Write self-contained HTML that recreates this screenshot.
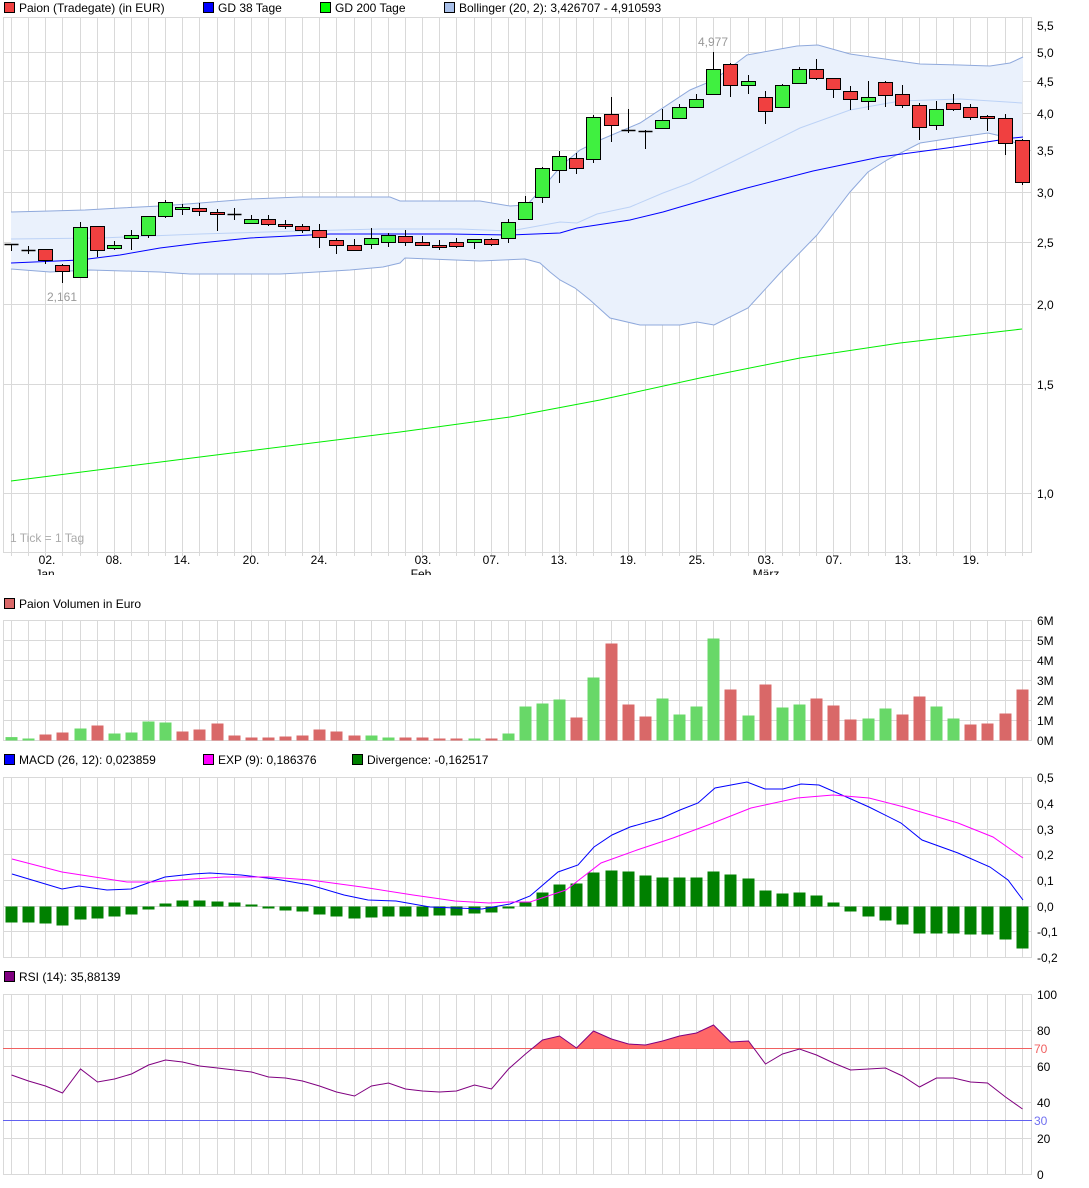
<!DOCTYPE html>
<html><head><meta charset="utf-8">
<style>
html,body{margin:0;padding:0;background:#fff;}
body{width:1089px;height:1188px;overflow:hidden;}
svg{display:block;font-family:"Liberation Sans",sans-serif;font-size:12px;}
</style></head>
<body>
<svg id="c" width="1089" height="1188" xmlns="http://www.w3.org/2000/svg"></svg>
<script>
var s='';
function X(i){return 11+17.13*i;}
function L(x1,y1,x2,y2,c,w){s+='<line x1="'+x1+'" y1="'+y1+'" x2="'+x2+'" y2="'+y2+'" stroke="'+c+'" stroke-width="'+(w||1)+'"/>';}
function R(x,y,w,h,f,st){s+='<rect x="'+x+'" y="'+y+'" width="'+w+'" height="'+h+'" fill="'+f+'"'+(st?' stroke="'+st+'" stroke-width="1"':'')+'/>';}
function T(x,y,t,c,a){s+='<text x="'+x+'" y="'+y+'" fill="'+(c||'#000')+'"'+(a?' text-anchor="'+a+'"':'')+'>'+t+'</text>';}
function P(pts,c,w,fill){var d=pts.map(function(p){return p[0]+','+p[1];}).join(' ');
 if(fill) s+='<polygon points="'+d+'" fill="'+fill+'" stroke="none"/>';
 else s+='<polyline points="'+d+'" fill="none" stroke="'+c+'" stroke-width="'+(w||1)+'"/>';}
var G='#d9d9d9';
function panel(top,bot,hl){
 L(3.5,top,3.5,bot,G);L(1031.5,top,1031.5,bot,G);
 for(var i=0;i<60;i++){var x=Math.round(X(i))+0.5;L(x,top,x,bot,G);}
 L(3,top+0.5,1032,top+0.5,G);L(3,bot+0.5,1032,bot+0.5,G);
 hl.forEach(function(y){L(3,y+0.5,1032,y+0.5,G);});
}
function leg(x,y,c,t){R(x+0.5,y-4.5,10,10,c,'#000');T(x+15,y+5,t);}
// ===== legends
leg(4,7,'#f04040','Paion (Tradegate) (in EUR)');
leg(203,7,'#0000ff','GD 38 Tage');
leg(320,7,'#00ff00','GD 200 Tage');
leg(444,7,'#a8bfe8','Bollinger (20, 2): 3,426707 - 4,910593');
// ===== main panel
var ml=[[52,'5,0'],[81,'4,5'],[113,'4,0'],[150,'3,5'],[192,'3,0'],[242,'2,5'],[304,'2,0'],[384,'1,5'],[493,'1,0']];
panel(17,552,ml.map(function(a){return a[0];}));
for(var i=0;i<60;i++){var x=Math.round(X(i))+0.5;L(x,552,x,556,G);}
T(1037,30,'5,5');ml.forEach(function(a){T(1037,a[0]+5,a[1]);});
var up=[[11,212],[50,211],[85,210],[120,208],[160,206],[200,203],[250,199],[300,197],[390,197],[400,201],[480,201],[510,206],[527,205],[545,185],[562,165],[580,150],[600,140],[640,123],[690,90],[714,80],[747,55],[797,46],[818,45],[850,54],[920,64],[960,65],[990,66],[1010,63],[1023,57]];
var lo=[[11,269],[50,272],[90,270],[160,272],[190,274],[280,274],[300,273],[350,270],[383,267],[400,263],[405,258],[480,261],[525,259],[540,263],[550,272],[560,280],[575,288],[590,300],[610,318],[640,325],[680,325],[697,322],[714,325],[748,308],[780,273],[817,235],[850,192],[868,172],[887,160],[920,143],[953,138],[988,133],[1005,137],[1022,147]];
P(up.concat(lo.slice().reverse()),null,1,'#eaf1fc');
P(up,'#8fa9dc');P(lo,'#8fa9dc');
P([[11,239],[100,238],[200,234],[300,231],[380,229],[460,229],[510,231],[527,228],[560,222],[577,223],[597,214],[630,207],[663,193],[690,183],[750,153],[800,128],[850,110],[900,101],[960,99],[1022,103]],'#bcd2f6');
P([[11,263],[80,260],[120,255],[160,248],[200,243],[250,238],[330,234],[450,234],[510,235],[560,233],[577,228],[630,220],[663,212],[680,207],[747,188],[813,171],[880,157],[947,148],[1013,138],[1023,137]],'#0000ff');
P([[11,481],[200,457],[400,432],[510,417],[600,400],[700,378],[800,358],[900,343],[1022,329]],'#00ee00');
// candles: [wickTop, bodyTop, bodyBot, wickBot, color]
var cd=[[244,244,244,251,'d'],[246,250,250,254,'d'],[249,249,260,264,'r'],[264,265,271,283,'r'],[222,227,277,277,'g'],[226,226,250,257,'r'],[241,245,248,250,'g'],[230,235,238,250,'g'],[216,216,235,238,'g'],[200,202,216,218,'g'],
[204,207,209,215,'g'],[203,208,211,216,'r'],[209,212,214,231,'r'],[208,214,214,220,'d'],[215,219,223,223,'g'],[215,219,224,226,'r'],[220,224,226,229,'r'],[224,226,230,233,'r'],[224,230,237,248,'r'],[238,240,245,254,'r'],
[239,245,250,250,'r'],[228,238,244,249,'g'],[233,235,242,247,'g'],[230,236,242,246,'r'],[236,242,245,246,'r'],[240,245,247,250,'r'],[238,242,246,248,'r'],[239,239,242,249,'g'],[238,239,244,246,'r'],[219,222,238,243,'g'],
[196,202,219,219,'g'],[167,168,197,203,'g'],[151,156,170,183,'g'],[153,158,168,174,'r'],[115,117,159,163,'g'],[97,114,125,142,'r'],[109,130,130,133,'d'],[130,131,131,149,'d'],[109,120,128,128,'g'],[104,107,118,118,'g'],
[94,99,107,107,'g'],[52,69,94,94,'g'],[63,64,85,97,'r'],[75,81,85,94,'g'],[91,97,111,124,'r'],[84,85,107,107,'g'],[67,69,83,83,'g'],[59,69,78,80,'r'],[78,78,89,98,'r'],[86,91,99,110,'r'],
[81,97,101,110,'g'],[81,82,95,107,'r'],[85,94,105,108,'r'],[103,105,127,140,'r'],[101,109,125,130,'g'],[94,103,109,111,'r'],[104,107,117,120,'r'],[115,116,118,131,'r'],[114,118,143,155,'r'],[139,140,182,185,'r']];
cd.forEach(function(c,i){var x=Math.round(X(i))+0.5;
 L(x,c[0],x,c[3],'#000');
 if(c[4]=='d'){L(x-7,c[1]+0.5,x+7,c[1]+0.5,'#000',1.5);}
 else R(x-7,c[1]+0.5,14,Math.max(c[2]-c[1],2),c[4]=='r'?'#f04040':'#40f040','#000');});
T(62,301,'2,161','#999','middle');T(713,46,'4,977','#999','middle');
T(10,542,'1 Tick = 1 Tag','#aaa');
// x labels
s+='<clipPath id="xc"><rect x="0" y="552" width="1089" height="23"/></clipPath><g clip-path="url(#xc)">';
[[47,'02.'],[114,'08.'],[182,'14.'],[251,'20.'],[319,'24.'],[423,'03.'],[491,'07.'],[559,'13.'],[628,'19.'],[697,'25.'],[766,'03.'],[834,'07.'],[903,'13.'],[971,'19.']].forEach(function(a){T(a[0],564,a[1],'#000','middle');});
T(45,578,'Jan','#000','middle');T(421,578,'Feb','#000','middle');T(766,578,'März','#000','middle');
s+='</g>';
// ===== volume
leg(4,603,'#d96868','Paion Volumen in Euro');
panel(620,740,[640,660,680,700,720]);
['6M','5M','4M','3M','2M','1M','0M'].forEach(function(t,k){T(1037,625+20*k,t);});
var vo=[.17,.1,.3,.4,.6,.75,.35,.4,.95,.9,.45,.55,.85,.25,.15,.15,.2,.25,.55,.45,.25,.25,.15,.15,.15,.1,.1,.1,.1,.35,1.7,1.85,2.05,1.15,3.15,4.85,1.8,1.2,2.1,1.3,1.7,5.1,2.55,1.25,2.8,1.65,1.8,2.1,1.75,1.05,1.1,1.6,1.3,2.2,1.7,1.1,.8,.85,1.35,2.55];
var vc='ggrrgrggggrrrrrrrrrrrggrrrrgrggggrgrrrggggrgrggrrrggrrggrrrr';
vo.forEach(function(v,i){var h=v*20;R(Math.round(X(i))-5.5,740.5-h,12,h,vc[i]=='g'?'#68d868':'#d96868');});
// ===== MACD
leg(4,759,'#0000ff','MACD (26, 12): 0,023859');leg(203,759,'#ff00ff','EXP (9): 0,186376');leg(352,759,'#008000','Divergence: -0,162517');
panel(777,957,[803,829,854,880,906,931]);
[['0,5',777],['0,4',803],['0,3',829],['0,2',854],['0,1',880],['0,0',906],['-0,1',931],['-0,2',957]].forEach(function(a){T(1037,a[1]+5,a[0]);});
var hd=[922,922,923,925,919,918,916,914,909,903,900,900,901,902,904,908,910,911,914,916,918,917,916,916,916,915,915,913,912,908,902,892,884,883,872,870,871,875,877,877,877,871,874,878,890,893,892,895,902,911,916,920,924,933,933,933,934,934,939,948];
hd.forEach(function(y,i){var t=Math.min(y,906),h=Math.abs(y-906);R(Math.round(X(i))-5.5,t+0.5,12,Math.max(h,1),'#008000');});
P([[12,874],[62,889],[79,886],[107,890],[131,889],[165,877],[193,874],[210,873],[241,875],[275,879],[310,885],[344,895],[368,900],[396,901],[430,907],[482,909],[510,904],[530,896],[558,872],[578,865],[594,847],[612,835],[630,827],[662,818],[680,810],[698,803],[715,788],[747,782],[765,789],[783,789],[801,784],[819,785],[851,799],[869,807],[901,823],[922,840],[958,853],[990,867],[1008,880],[1023,900]],'#0000ff');
P([[12,859],[62,872],[127,882],[152,882],[193,879],[224,877],[269,877],[310,880],[362,887],[413,895],[455,901],[489,903],[510,902],[530,902],[566,890],[601,863],[637,850],[673,838],[708,825],[751,808],[797,798],[833,795],[869,798],[904,807],[958,823],[993,837],[1023,858]],'#ff00ff');
// ===== RSI
leg(4,976,'#800080','RSI (14): 35,88139');
panel(994,1174,[1030,1066,1102,1138]);
var rs=[1075,1081,1086,1093,1069,1082,1079,1074,1065,1060,1062,1066,1068,1070,1072,1077,1078,1081,1086,1092,1096,1086,1083,1089,1091,1092,1091,1085,1089,1069,1054,1040,1036,1048,1031,1039,1044,1045,1041,1036,1033,1025,1042,1041,1064,1054,1049,1055,1063,1070,1069,1068,1076,1087,1078,1078,1082,1083,1097,1109];
var rp=rs.map(function(y,i){return [Math.round(X(i))+0.5,y];});
// fill above 70
s+='<clipPath id="rc"><rect x="0" y="990" width="1089" height="58.5"/></clipPath>';
s+='<g clip-path="url(#rc)">';P(rp.concat([[1023,1048.5],[11,1048.5]]),null,1,'#ff6868');s+='</g>';
L(3,1048.5,1032,1048.5,'#f06060');L(3,1120.5,1032,1120.5,'#6060f0');
P(rp,'#800080');
T(1037,1035,'80');T(1037,1071,'60');T(1037,1107,'40');T(1037,1143,'20');T(1037,999,'100');T(1037,1179,'0');
T(1034,1053,'70','#f06060');T(1034,1125,'30','#7070f0');
document.getElementById('c').innerHTML=s;
</script>
</body></html>
